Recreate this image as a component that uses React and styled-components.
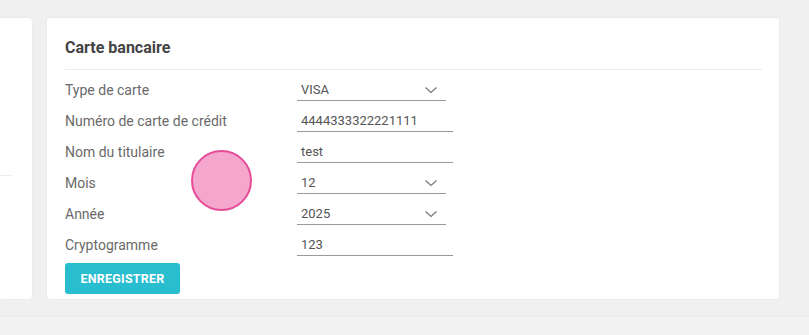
import React from "react";
import styled, { createGlobalStyle } from "styled-components";

const GlobalStyle = createGlobalStyle`
  html, body {
    margin: 0;
    padding: 0;
    background: #f0f0f0;
    font-family: Roboto, "Liberation Sans", sans-serif;
    overflow: hidden;
  }
`;

const Page = styled.div`
  position: relative;
  width: 809px;
  height: 335px;
`;

const Columns = styled.div`
  display: grid;
  grid-template-columns: 1fr 732px;
  gap: 15px;
  padding: 18px 30px 0 0;
  height: 281px;
`;

const Card = styled.div`
  background: #fff;
  border-radius: 3px;
  box-shadow: 0 0 2px rgba(0, 0, 0, 0.08);
  padding: 0 17px 0 18px;
`;

const SideCard = styled(Card)`
  padding: 0;
  border-radius: 0 3px 3px 0;
`;

const SideRule = styled.div`
  margin-top: 157px;
  width: 12px;
  border-bottom: 1px solid #ececec;
`;

const Header = styled.div`
  height: 52px;
  display: flex;
  align-items: center;
  padding-top: 8px;
  box-sizing: border-box;
  border-bottom: 1px solid #ebebeb;
`;

const Title = styled.h2`
  margin: 0;
  font-size: 16px;
  font-weight: 700;
  color: #444;
`;

const Form = styled.div`
  margin-top: 4px;
`;

const Row = styled.div`
  display: grid;
  grid-template-columns: 232px auto;
  align-items: center;
  height: 31px;
`;

const Label = styled.span`
  font-size: 14px;
  color: #6a6a6a;
`;

const Field = styled.div`
  display: flex;
  align-items: center;
  justify-content: space-between;
  width: ${(p) => (p.$select ? "149px" : "156px")};
  height: 22px;
  box-sizing: border-box;
  padding: 0 8px 0 4px;
  border-bottom: 1px solid #9a9a9a;
  font-size: 13px;
  color: #555;
  margin-top: 1px;
`;

const Chevron = styled.svg`
  width: 14px;
  height: 14px;
  flex: none;
`;

const Button = styled.button`
  margin-top: 3px;
  width: 115px;
  height: 31px;
  border: none;
  border-radius: 3px;
  background: #29bdd0;
  color: #fff;
  font-family: Roboto, "Liberation Sans", sans-serif;
  font-size: 12.5px;
  font-weight: 700;
  letter-spacing: 0.2px;
`;

const Footer = styled.div`
  margin-top: 17px;
  height: 19px;
  border-top: 1px solid #ebebeb;
  background: #f2f2f2;
`;

const Touch = styled.div`
  position: absolute;
  left: 191px;
  top: 150px;
  width: 57px;
  height: 57px;
  border-radius: 50%;
  background: #f5a6cd;
  border: 2.5px solid #e54c98;
`;

const rows = [
  { label: "Type de carte", value: "VISA", select: true },
  { label: "Numéro de carte de crédit", value: "4444333322221111" },
  { label: "Nom du titulaire", value: "test" },
  { label: "Mois", value: "12", select: true },
  { label: "Année", value: "2025", select: true },
  { label: "Cryptogramme", value: "123" },
];

function Arrow() {
  return (
    <Chevron viewBox="0 0 14 14">
      <path d="M1.5 4.5 L7 9.5 L12.5 4.5" fill="none" stroke="#777" strokeWidth="1.2" />
    </Chevron>
  );
}

export default function App() {
  return (
    <Page>
      <GlobalStyle />
      <Columns>
        <SideCard>
          <SideRule />
        </SideCard>
        <Card>
          <Header>
            <Title>Carte bancaire</Title>
          </Header>
          <Form>
            {rows.map((r) => (
              <Row key={r.label}>
                <Label>{r.label}</Label>
                <Field $select={r.select}>
                  <span>{r.value}</span>
                  {r.select && <Arrow />}
                </Field>
              </Row>
            ))}
          </Form>
          <Button>ENREGISTRER</Button>
        </Card>
      </Columns>
      <Footer />
      <Touch />
    </Page>
  );
}
